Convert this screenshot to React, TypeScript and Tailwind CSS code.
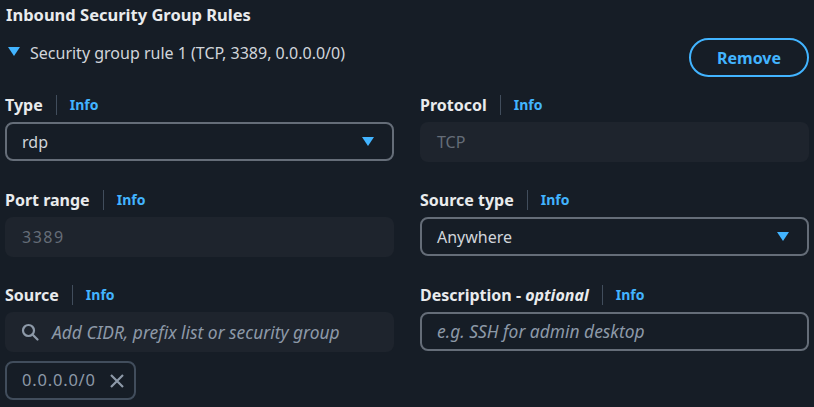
import React from "react";

const font = { fontFamily: '"Noto Sans", "Open Sans", Arial, sans-serif' };

function Tri({ className = "" }: { className?: string }) {
  return (
    <svg width="12" height="9" viewBox="0 0 12 9" className={className}>
      <path d="M0 0 H12 L6 9 Z" fill="#42b4ff" />
    </svg>
  );
}

function Label({ children }: { children: React.ReactNode }) {
  return (
    <div className="flex items-center h-[22px] mb-[6px]">
      <span className="text-[16px] font-bold text-[#e9ebed] leading-[22px]">{children}</span>
      <span className="mx-[13px] h-[20px] w-px bg-[#414d5c]" />
      <span className="text-[14px] font-bold text-[#42b4ff] leading-[22px]">Info</span>
    </div>
  );
}

export default function App() {
  return (
    <div style={font} className="w-[814px] h-[407px] bg-[#161d26] overflow-hidden px-[5px] pt-[3px]">
      <div className="text-[16.5px] font-bold text-[#e9ebed] leading-[24px] pl-[1px]">Inbound Security Group Rules</div>
      <div className="flex items-start justify-between">
        <div className="flex items-center mt-[14px] pl-[3px] h-[24px]">
          <Tri className="-mt-[3px]" />
          <span className="ml-[10px] text-[16px] text-[#d1d5db] leading-[24px]">Security group rule 1 (TCP, 3389, 0.0.0.0/0)</span>
        </div>
        <button className="mt-[11px] w-[120px] h-[39px] rounded-full border-2 border-[#42b4ff] text-[#42b4ff] font-bold text-[16px] leading-none">
          Remove
        </button>
      </div>
      <div className="grid grid-cols-2 gap-x-[26px] mt-[17px]">
        <div className="h-[95px]">
          <Label>Type</Label>
          <div className="h-[39px] rounded-[8px] border-2 border-[#656d78] flex items-center justify-between pl-[15px] pr-[18px]">
            <span className="text-[16px] text-[#d1d5db]">rdp</span>
            <Tri />
          </div>
        </div>
        <div className="h-[95px]">
          <Label>Protocol</Label>
          <div className="h-[40px] rounded-[8px] bg-[#1e242d] flex items-center pl-[17px]">
            <span className="text-[16px] text-[#656d78]">TCP</span>
          </div>
        </div>
        <div className="h-[95px]">
          <Label>Port range</Label>
          <div className="h-[40px] rounded-[8px] bg-[#1e242d] flex items-center pl-[17px]">
            <span className="text-[16px] text-[#656d78] tracking-[1.5px]">3389</span>
          </div>
        </div>
        <div className="h-[95px]">
          <Label>Source type</Label>
          <div className="h-[39px] rounded-[8px] border-2 border-[#656d78] flex items-center justify-between pl-[15px] pr-[18px]">
            <span className="text-[16px] text-[#d1d5db]">Anywhere</span>
            <Tri />
          </div>
        </div>
        <div>
          <Label>Source</Label>
          <div className="h-[40px] rounded-[8px] bg-[#1e242d] flex items-center pl-[16px]">
            <svg width="18" height="18" viewBox="0 0 18 18" fill="none" stroke="#8d99a8" strokeWidth="2.2">
              <circle cx="7.5" cy="7.5" r="5.5" />
              <path d="M11.5 11.5 L16.5 16.5" strokeLinecap="round" />
            </svg>
            <span className="ml-[13px] text-[17.4px] italic text-[#8d99a8]">Add CIDR, prefix list or security group</span>
          </div>
          <div className="mt-[9px] w-[131px] h-[39px] rounded-[8px] border-2 border-[#414d5c] flex items-center pl-[15px] gap-[13px]">
            <span className="text-[16.5px] text-[#8d99a8] tracking-[0.8px]">0.0.0.0/0</span>
            <svg width="16" height="16" viewBox="0 0 16 16" stroke="#8d99a8" strokeWidth="2.2">
              <path d="M2 2 L14 14 M14 2 L2 14" />
            </svg>
          </div>
        </div>
        <div>
          <Label>
            Description - <i>optional</i>
          </Label>
          <div className="h-[39px] rounded-[8px] border-2 border-[#656d78] flex items-center pl-[15px]">
            <span className="text-[17.4px] italic text-[#8d99a8]">e.g. SSH for admin desktop</span>
          </div>
        </div>
      </div>
    </div>
  );
}
